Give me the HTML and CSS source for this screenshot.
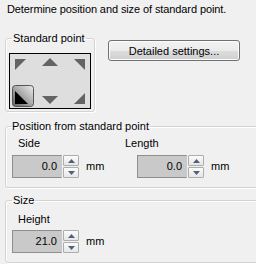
FILE: index.html
```html
<!DOCTYPE html>
<html lang="en">
<head>
    <meta charset="UTF-8">
    <title>Standard point</title>
    <link rel="stylesheet" href="styles.css">
</head>
<body>
    <p class="intro">Determine position and size of standard point.</p>

    <div class="top-row">
        <fieldset class="group group-point">
            <legend>Standard point</legend>
            <div class="point-box">
                <button class="pt">
                    <svg width="22" height="22"><polygon points="3,3 14,3 3,14" fill="#646464"/></svg>
                </button>
                <button class="pt">
                    <svg width="22" height="22"><polygon points="3,10 19,10 11,2" fill="#646464"/></svg>
                </button>
                <button class="pt">
                    <svg width="22" height="22"><polygon points="8,3 19,3 19,14" fill="#646464"/></svg>
                </button>
                <button class="pt selected">
                    <svg width="22" height="22">
                        <defs>
                            <linearGradient id="sel" x1="1" y1="0" x2="0" y2="1">
                                <stop offset="0" stop-color="#eeeeee"/>
                                <stop offset="0.5" stop-color="#a8a8a8"/>
                                <stop offset="1" stop-color="#606060"/>
                            </linearGradient>
                        </defs>
                        <rect x="0.5" y="0.5" width="21" height="21" rx="3" fill="url(#sel)" stroke="#555"/>
                        <polygon points="3,6 3,19 16,19" fill="#000"/>
                    </svg>
                </button>
                <button class="pt">
                    <svg width="22" height="22"><polygon points="3,11 19,11 11,19" fill="#646464"/></svg>
                </button>
                <button class="pt">
                    <svg width="22" height="22"><polygon points="19,8 19,19 8,19" fill="#646464"/></svg>
                </button>
            </div>
        </fieldset>
        <button class="btn">Detailed settings...</button>
    </div>

    <fieldset class="group group-wide group-pos">
        <legend>Position from standard point</legend>
        <div class="fields">
            <div class="field field-first">
                <div class="label">Side</div>
                <div class="spin-row">
                    <div class="num">0.0</div>
                    <div class="spin">
                        <button class="spin-btn"><svg width="7" height="4"><polygon points="0,4 7,4 3.5,0" fill="#50607a"/></svg></button>
                        <button class="spin-btn"><svg width="7" height="4"><polygon points="0,0 7,0 3.5,4" fill="#50607a"/></svg></button>
                    </div>
                    <span class="unit">mm</span>
                </div>
            </div>
            <div class="field field-second">
                <div class="label">Length</div>
                <div class="spin-row">
                    <div class="num">0.0</div>
                    <div class="spin">
                        <button class="spin-btn"><svg width="7" height="4"><polygon points="0,4 7,4 3.5,0" fill="#50607a"/></svg></button>
                        <button class="spin-btn"><svg width="7" height="4"><polygon points="0,0 7,0 3.5,4" fill="#50607a"/></svg></button>
                    </div>
                    <span class="unit">mm</span>
                </div>
            </div>
        </div>
    </fieldset>

    <fieldset class="group group-wide group-size">
        <legend>Size</legend>
        <div class="field field-first">
            <div class="label">Height</div>
            <div class="spin-row">
                <div class="num">21.0</div>
                <div class="spin">
                    <button class="spin-btn"><svg width="7" height="4"><polygon points="0,4 7,4 3.5,0" fill="#50607a"/></svg></button>
                    <button class="spin-btn"><svg width="7" height="4"><polygon points="0,0 7,0 3.5,4" fill="#50607a"/></svg></button>
                </div>
                <span class="unit">mm</span>
            </div>
        </div>
    </fieldset>
</body>
</html>
```

FILE: styles.css
```css
body {
    margin: 0;
    width: 256px;
    height: 264px;
    overflow: hidden;
    background-color: #f0f0f0;
    font-family: "Liberation Sans", Arial, sans-serif;
    font-size: 11px;
    line-height: 13px;
    color: #000;
}

.intro {
    margin: 0;
    padding: 3px 0 0 7px;
    letter-spacing: -0.1px;
}

.top-row {
    display: flex;
    align-items: flex-start;
}

/* group boxes */
.group {
    margin: 0 0 0 5px;
    border: 1px solid #d3d3d3;
    border-radius: 3px;
    box-shadow: inset 1px 1px 0 #fff, 1px 1px 0 #fff;
    box-sizing: border-box;
}

.group legend {
    padding: 0 1px;
    line-height: 13px;
}

.group-point {
    width: 90px;
    margin-top: 16px;
    padding: 8px 3px 2px 3px;
}

.group-point legend {
    margin-left: 3px;
}

.group-wide {
    width: 262px;
    padding: 0 0 9px 6px;
}

.group-pos {
    margin-top: 8px;
    padding-top: 4px;
}

.group-pos legend {
    margin-left: -1px;
}

.group-size {
    margin-top: 6px;
    padding-top: 6px;
}

.group-size .label {
    margin-bottom: 4px;
}

/* standard point picker */
.point-box {
    display: grid;
    grid-template-columns: repeat(3, 22px);
    grid-template-rows: 22px 22px;
    justify-content: space-between;
    row-gap: 7px;
    height: 56px;
    padding: 2px 2px 1px 2px;
    border: 1px solid #000;
    background-color: #dedede;
    box-sizing: border-box;
}

.pt {
    width: 22px;
    height: 22px;
    padding: 0;
    border: none;
    background: none;
}

.pt svg {
    display: block;
}

.btn {
    margin: 24px 0 0 13px;
    width: 132px;
    height: 21px;
    padding: 0;
    font-family: inherit;
    font-size: 11px;
    color: #000;
    border: 1px solid #707070;
    border-radius: 3px;
    background: linear-gradient(#f2f2f2 0%, #ebebeb 50%, #dddddd 51%, #cfcfcf 100%);
    box-shadow: inset 0 0 0 1px #fcfcfc;
}

/* numeric fields */
.fields {
    display: flex;
}

.field-first {
    width: 113px;
}

.field-first .label {
    margin-left: 6px;
}

.label {
    margin-bottom: 5px;
}

.field-second .spin-row {
    margin-left: 12px;
}

.spin-row {
    display: flex;
    align-items: center;
}

.num {
    width: 50px;
    height: 23px;
    box-sizing: border-box;
    padding-right: 4px;
    text-align: right;
    line-height: 21px;
    background-color: #c9c9c9;
    border: 1px solid #8e8e8e;
    border-right-color: #c9c9c9;
}

.spin {
    display: flex;
    flex-direction: column;
    gap: 1px;
    margin-left: 1px;
}

.spin-btn {
    width: 16px;
    height: 11px;
    padding: 0;
    display: flex;
    align-items: center;
    justify-content: center;
    border: 1px solid #adadad;
    border-radius: 1px;
    background: linear-gradient(#fbfbfb, #e6e6e6);
}

.spin-btn svg {
    display: block;
}

.unit {
    margin-left: 7px;
}
```
